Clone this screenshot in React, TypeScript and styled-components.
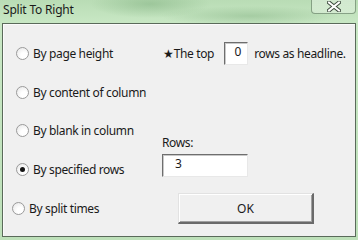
import React from "react";
import styled, { createGlobalStyle } from "styled-components";

const Global = createGlobalStyle`
  html, body { margin: 0; padding: 0; }
  body { width: 358px; height: 240px; overflow: hidden; font-family: "Noto Sans", "Open Sans", sans-serif; }
`;

const Frame = styled.div`
  width: 358px;
  height: 240px;
  box-sizing: border-box;
  display: flex;
  flex-direction: column;
  padding: 0 2px 3px 2px;
  background:
    radial-gradient(ellipse 60px 14px at 150px 4px, rgba(120,170,120,0.45), transparent),
    radial-gradient(ellipse 90px 10px at 250px 16px, rgba(110,160,110,0.35), transparent),
    linear-gradient(180deg, #b9dcb5 0%, #c9e8c5 10%, #bde0b9 100%);
`;

const TitleBar = styled.div`
  height: 23px;
  display: flex;
  align-items: flex-start;
  justify-content: space-between;
`;

const Title = styled.div`
  font-family: "Noto Sans", sans-serif;
  font-size: 12px;
  letter-spacing: -0.2px;
  color: #1a1a1a;
  padding: 2px 0 0 1px;
  line-height: 16px;
`;

const CloseButton = styled.div`
  width: 45px;
  height: 14px;
  box-sizing: border-box;
  border: 1px solid rgba(70, 100, 70, 0.55);
  border-top: none;
  border-radius: 0 0 4px 4px;
  background: linear-gradient(180deg, rgba(255,255,255,0.35), rgba(230,245,228,0.5));
  display: flex;
  align-items: center;
  justify-content: center;
`;

const Client = styled.div`
  flex: 1;
  box-sizing: border-box;
  border: 1px solid #5a6a5a;
  box-shadow: inset 1px 1px 0 #fbfbfb;
  background: #f0f0f0;
  display: grid;
  grid-template-columns: 158px 1fr;
  grid-template-rows: repeat(5, 38.8px);
  padding-top: 10px;
  font-family: "Noto Sans", sans-serif;
  font-size: 12px;
  letter-spacing: -0.35px;
  color: #1a1a1a;
  white-space: nowrap;
`;

const RadioRow = styled.label<{ $shift?: number }>`
  grid-column: 1;
  display: flex;
  align-items: center;
  gap: 4px;
  padding-left: ${(p) => 13 - (p.$shift ?? 0)}px;
`;

const RadioCircle = styled.span<{ $checked?: boolean }>`
  width: 13px;
  height: 13px;
  box-sizing: border-box;
  border-radius: 50%;
  border: 1px solid #9a9a9a;
  background: radial-gradient(circle at 65% 70%, #ffffff 30%, #e4e4e4 100%);
  display: flex;
  align-items: center;
  justify-content: center;
  &::after {
    content: "";
    width: 5px;
    height: 5px;
    border-radius: 50%;
    background: ${(p) => (p.$checked ? "#151515" : "transparent")};
  }
`;

const HeadlineRow = styled.div`
  grid-column: 2;
  grid-row: 1;
  display: flex;
  align-items: center;
  padding-left: 2px;
`;

const NumBox = styled.div<{ $w: number; $align: "center" | "left" }>`
  width: ${(p) => p.$w}px;
  height: 23px;
  box-sizing: border-box;
  background: #fff;
  border-top: 1px solid #6e6e6e;
  border-left: 1px solid #6e6e6e;
  border-right: 1px solid #e8e8e8;
  border-bottom: 1px solid #e8e8e8;
  box-shadow: inset 1px 1px 0 #c8c8c8;
  font-size: 12px;
  line-height: 18px;
  padding-left: ${(p) => (p.$align === "left" ? "12px" : "0")};
  text-align: ${(p) => p.$align};
`;

const HeadBox = styled(NumBox)`
  margin: 0 6px 0 10px;
  padding-left: 3px;
`;

const RowsGroup = styled.div`
  grid-column: 2;
  grid-row: 3 / span 2;
  display: flex;
  flex-direction: column;
  gap: 3px;
  padding-top: 22px;
  padding-left: 1px;
`;

const OkCell = styled.div`
  grid-column: 2;
  grid-row: 5;
  display: flex;
  align-items: center;
  padding-left: 17px;
`;

const OkButton = styled.button`
  width: 136px;
  height: 31px;
  box-sizing: border-box;
  background: #f0f0f0;
  border-top: 1px solid #e2e2e2;
  border-left: 1px solid #e2e2e2;
  border-right: 2px solid #6a6a6a;
  border-bottom: 2px solid #6a6a6a;
  box-shadow: inset 1px 1px 0 #ffffff, inset -1px -1px 0 #a0a0a0;
  font-family: "Noto Sans", sans-serif;
  font-size: 12px;
  color: #1a1a1a;
  padding: 0;
`;

const options = [
  "By page height",
  "By content of column",
  "By blank in column",
  "By specified rows",
  "By split times",
];

export default function App() {
  return (
    <>
      <Global />
      <Frame>
        <TitleBar>
          <Title>Split To Right</Title>
          <CloseButton>
            <svg width="14" height="11" viewBox="0 0 14 11">
              <path
                d="M2 1.5 L12 9.5 M12 1.5 L2 9.5"
                stroke="#3d4a3d"
                strokeWidth="4"
                strokeLinecap="square"
              />
              <path
                d="M2 1.5 L12 9.5 M12 1.5 L2 9.5"
                stroke="#ffffff"
                strokeWidth="2"
                strokeLinecap="square"
              />
            </svg>
          </CloseButton>
        </TitleBar>
        <Client>
          {options.map((o, i) => (
            <RadioRow key={o} style={{ gridRow: i + 1 }} $shift={i === 4 ? 4 : 0}>
              <RadioCircle $checked={i === 3} />
              <span>{o}</span>
            </RadioRow>
          ))}
          <HeadlineRow>
            <span>★The top</span>
            <HeadBox $w={24} $align="center">0</HeadBox>
            <span>rows as headline.</span>
          </HeadlineRow>
          <RowsGroup>
            <span>Rows:</span>
            <NumBox $w={86} $align="left">3</NumBox>
          </RowsGroup>
          <OkCell>
            <OkButton>OK</OkButton>
          </OkCell>
        </Client>
      </Frame>
    </>
  );
}
